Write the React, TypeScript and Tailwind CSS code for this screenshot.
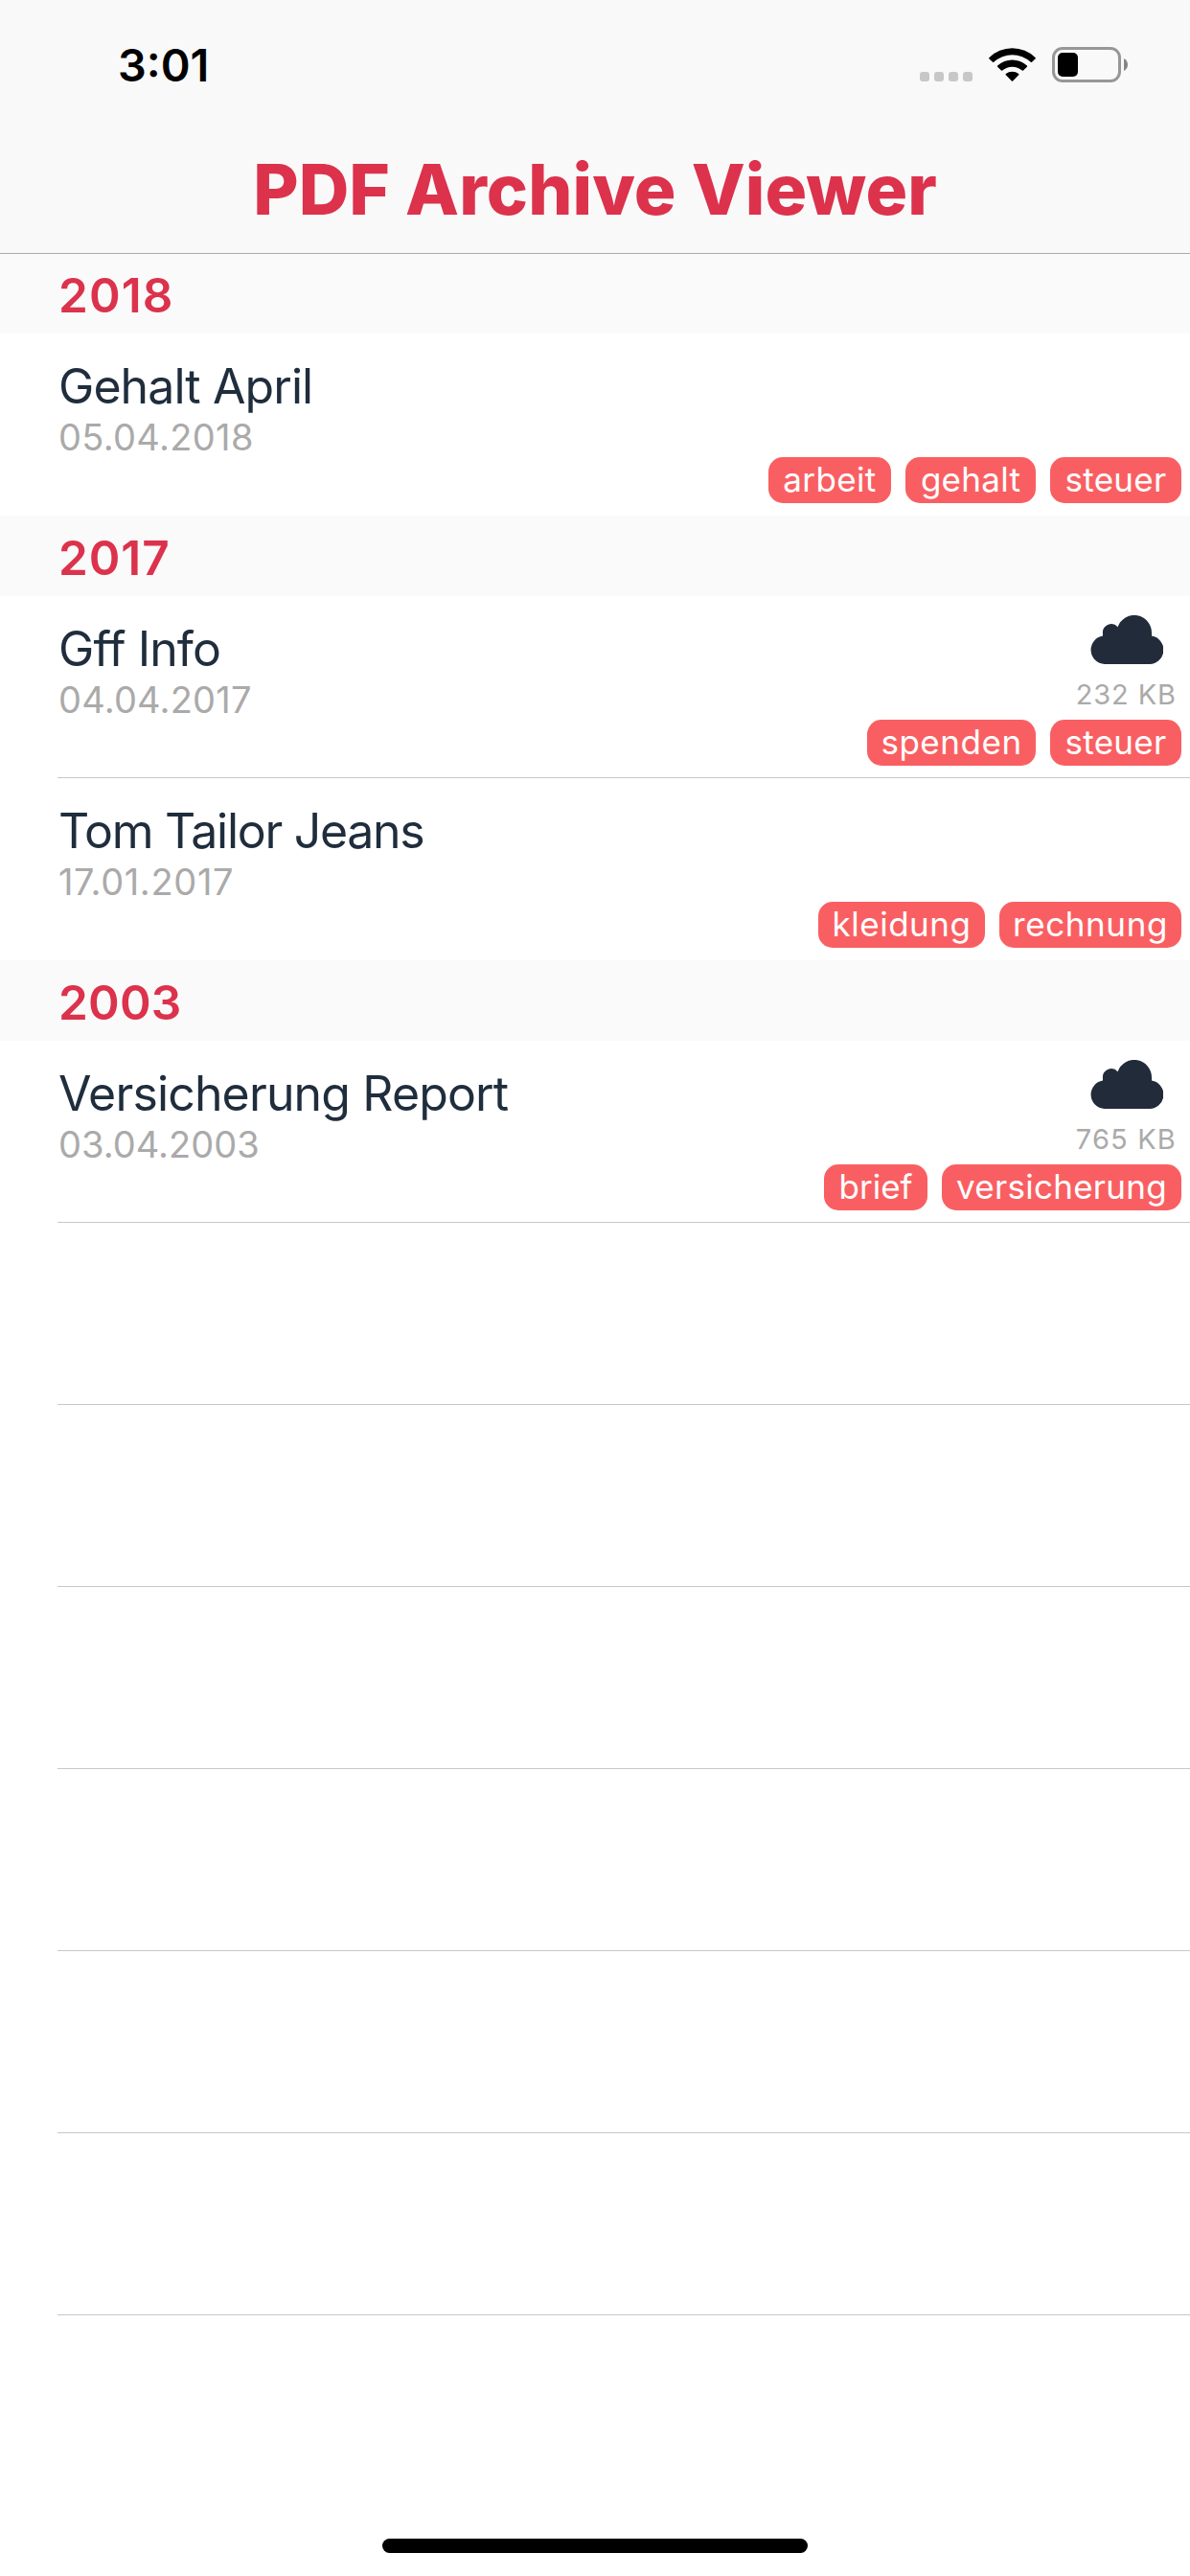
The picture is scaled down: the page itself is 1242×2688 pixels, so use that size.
type Tag = { label: string; size: string };
type Doc = { title: string; titleTracking: string; date: string; dateTracking: string; size?: string; sizeTracking?: string; tags: Tag[] };
type Section = { year: string; tracking: string; docs: Doc[] };

const steuer: Tag = { label: 'steuer', size: 'w-[137px] tracking-[0.28px]' };

const sections: Section[] = [
  {
    year: '2018',
    tracking: 'tracking-[1.1px]',
    docs: [
      {
        title: 'Gehalt April',
        titleTracking: 'tracking-[-0.92px]',
        date: '05.04.2018',
        dateTracking: 'tracking-[0.34px]',
        tags: [
          { label: 'arbeit', size: 'w-[128px] tracking-[0.36px]' },
          { label: 'gehalt', size: 'w-[136px] tracking-[0.26px]' },
          steuer,
        ],
      },
    ],
  },
  {
    year: '2017',
    tracking: 'tracking-[0.9px]',
    docs: [
      {
        title: 'Gff Info',
        titleTracking: 'tracking-[-0.92px]',
        date: '04.04.2017',
        dateTracking: 'tracking-[0.22px]',
        size: '232 KB',
        sizeTracking: 'tracking-[0.91px]',
        tags: [{ label: 'spenden', size: 'w-[176px] tracking-[0.53px]' }, steuer],
      },
      {
        title: 'Tom Tailor Jeans',
        titleTracking: 'tracking-[-1.3px]',
        date: '17.01.2017',
        dateTracking: 'tracking-[0.65px]',
        tags: [
          { label: 'kleidung', size: 'w-[174px] tracking-[0.52px]' },
          { label: 'rechnung', size: 'w-[190px] tracking-[0.61px]' },
        ],
      },
    ],
  },
  {
    year: '2003',
    tracking: 'tracking-[0.2px]',
    docs: [
      {
        title: 'Versicherung Report',
        titleTracking: 'tracking-[-0.85px]',
        date: '03.04.2003',
        dateTracking: 'tracking-[0.04px]',
        size: '765 KB',
        sizeTracking: 'tracking-[1.16px]',
        tags: [
          { label: 'brief', size: 'w-[108px]' },
          { label: 'versicherung', size: 'w-[250px] tracking-[0.26px]' },
        ],
      },
    ],
  },
];

function WifiIcon() {
  return (
    <svg className="ml-[17px] mt-[49px] h-9 w-[49px]" viewBox="0 0 49 36" fill="#000">
      <path d="M0.3 11.2 A34.5 34.5 0 0 1 48.7 11.2 Q49.2 11.7 48.7 12.2 L45 15.8 Q44.4 16.3 43.8 15.8 A28.3 28.3 0 0 0 5.2 15.8 Q4.6 16.3 4 15.8 L0.3 12.2 Q-0.2 11.7 0.3 11.2Z" />
      <path d="M9.1 19.6 A22.5 22.5 0 0 1 39.9 19.6 Q40.5 20.2 39.9 20.8 L36 24.6 Q35.4 25.1 34.8 24.6 A15.8 15.8 0 0 0 14.2 24.6 Q13.6 25.1 13 24.6 L9.1 20.8 Q8.5 20.2 9.1 19.6Z" />
      <path d="M17.8 28.1 A10.6 10.6 0 0 1 31.2 28.1 Q31.8 28.7 31.2 29.3 L25.1 35.4 Q24.5 36 23.9 35.4 L17.8 29.3 Q17.2 28.7 17.8 28.1Z" />
    </svg>
  );
}

function CloudIcon() {
  return (
    <svg className="mr-7 mt-5 h-[51px] w-[76px]" viewBox="0 0 76 51" fill="#222b3a">
      <path d="M14.8 51 A14.8 14.8 0 0 1 13 21.6 V19.5 A9 9 0 0 1 28.6 12.2 A18.2 18.2 0 0 1 64 18.6 V21.6 A14.8 14.8 0 0 1 61.2 51 Z" />
    </svg>
  );
}

function StatusBar() {
  return (
    <div className="flex h-[132px] items-start justify-between pl-[123px] pr-[65px]">
      <span className="mt-[38px] text-[46.8px] leading-[60px] font-semibold text-black">3:01</span>
      <div className="flex items-start">
        <div className="mt-[75px] flex gap-[5px]">
          {[0, 1, 2, 3].map((i) => (
            <span key={i} className="size-[10px] rounded-[3px] bg-[#c7c7c7]" />
          ))}
        </div>
        <WifiIcon />
        <div className="ml-[17px] mt-[49px] flex h-[37px] w-[72px] rounded-[11px] border-[3px] border-[#979797] p-[3px]">
          <span className="h-[25px] w-[21px] rounded-[5px] bg-black" />
        </div>
        <svg className="ml-[3px] mt-[61px] h-[13px] w-1" viewBox="0 0 4 13" fill="#858585">
          <path d="M0 0 C5.3 2.5 5.3 10.5 0 13Z" />
        </svg>
      </div>
    </div>
  );
}

function Row({ doc, last }: { doc: Doc; last: boolean }) {
  return (
    <li className={`ml-[60px] flex h-[190px] justify-between ${last ? '' : 'border-b border-[#c8c7cc]'}`}>
      <div className="pt-[27px] pl-px whitespace-nowrap">
        <p className={`text-[50px] leading-[56px] text-[#1f2d3d] ${doc.titleTracking}`}>{doc.title}</p>
        <p className={`text-[38px] leading-[50px] text-[#aaaaaa] ${doc.dateTracking}`}>{doc.date}</p>
      </div>
      <div className="flex flex-col items-end">
        {doc.size ? (
          <div className="flex h-[129px] flex-col items-end">
            <CloudIcon />
            <span className={`mr-[14px] mt-[15px] text-[29px] leading-[33px] text-[#aaaaaa] ${doc.sizeTracking}`}>{doc.size}</span>
          </div>
        ) : (
          <div className="h-[129px]" />
        )}
        <div className="mr-[9px] flex gap-[15px]">
          {doc.tags.map((t) => (
            <span key={t.label} className={`h-12 rounded-[15px] bg-[#f95f62] text-center text-[35px] leading-[47px] text-white ${t.size}`}>
              {t.label}
            </span>
          ))}
        </div>
      </div>
    </li>
  );
}

export default function App() {
  return (
    <div className="flex h-[2688px] w-[1242px] flex-col overflow-hidden bg-white font-['Inter',sans-serif]">
      <header className="relative z-10 h-[265px] shrink-0 border-b border-[#acacac] bg-[#f9f9f9]">
        <StatusBar />
        <h1 className="text-center text-[72.8px] leading-[132px] font-extrabold tracking-[0.08px] text-[#dc324c]">PDF Archive Viewer</h1>
      </header>
      <main className="-mt-px flex-1">
        {sections.map((s, i) => (
          <section key={s.year}>
            <h2 className={`h-[84px] bg-[#fafafa] pl-[61px] text-[49.5px] leading-[88px] font-semibold text-[#dc324c] ${s.tracking}`}>{s.year}</h2>
            <ul>
              {s.docs.map((d, j) => (
                <Row key={d.title} doc={d} last={j === s.docs.length - 1 && i < sections.length - 1} />
              ))}
            </ul>
          </section>
        ))}
        {[0, 1, 2, 3, 4, 5].map((i) => (
          <div key={i} className="ml-[60px] h-[190px] border-b border-[#c8c7cc]" />
        ))}
      </main>
      <footer className="flex h-[39px] shrink-0 items-start justify-center">
        <div className="h-[15px] w-[444px] rounded-full bg-black" />
      </footer>
    </div>
  );
}
